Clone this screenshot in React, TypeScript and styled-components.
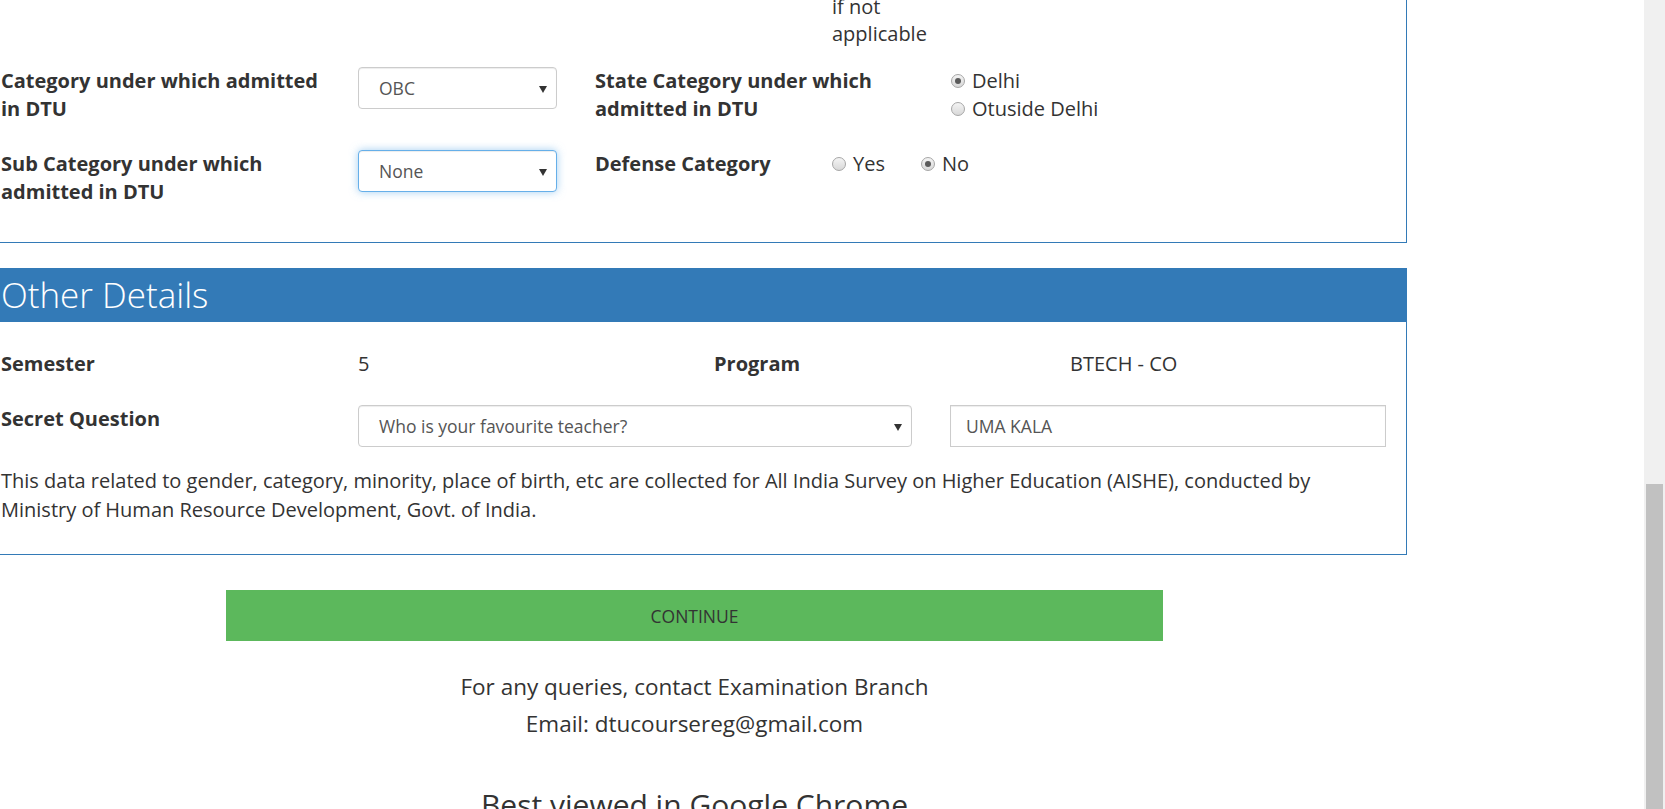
import React from "react";
import styled, { createGlobalStyle } from "styled-components";

const Global = createGlobalStyle`
  html, body { margin: 0; padding: 0; overflow: hidden; background: #fff; }
  body { font-family: "Open Sans", "Liberation Sans", sans-serif; color: #333; font-size: 20px; line-height: 28px; }
  * { box-sizing: border-box; }
`;

const Shell = styled.div`
  display: flex;
  width: 1665px;
  height: 809px;
  overflow: hidden;
`;

const Main = styled.div`
  flex: 1;
  height: 809px;
  overflow: hidden;
  display: flex;
  flex-direction: column;
`;

const ScrollTrack = styled.div`
  width: 21px;
  height: 809px;
  background: #f0f0f0;
  display: flex;
  flex-direction: column;
  justify-content: flex-end;
  padding: 0 2px 0 2px;
`;

const ScrollThumb = styled.div`
  height: 325px;
  background: #c1c1c1;
`;

const Panel = styled.section<{ $top?: number }>`
  width: 1408px;
  margin-left: -1px;
  margin-top: ${(p) => p.$top ?? 0}px;
  border: 1px solid #337ab7;
  flex-shrink: 0;
`;

const PanelBody = styled.div<{ $pt: number; $pb: number }>`
  padding: ${(p) => p.$pt}px 0 ${(p) => p.$pb}px 1px;
  display: flex;
  flex-direction: column;
`;

const Heading = styled.div`
  background: #337ab7;
  color: #fff;
  height: 54px;
  margin: -1px -1px 0 -1px;
  padding-left: 2px;
  font-weight: 300;
  font-size: 35px;
  line-height: 54px;
`;

const FormRow = styled.div<{ $cols: string; $mt?: number }>`
  display: grid;
  grid-template-columns: ${(p) => p.$cols};
  align-items: start;
  margin-top: ${(p) => p.$mt ?? 0}px;
`;

const Label = styled.div`
  font-weight: 700;
  line-height: 28px;
`;

const Value = styled.div`
  line-height: 28px;
`;

const Note = styled.div`
  line-height: 27px;
  color: #333;
`;

const SelectBox = styled.div<{ $focus?: boolean }>`
  position: relative;
  height: 42px;
  border: 1px solid ${(p) => (p.$focus ? "#66afe9" : "#ccc")};
  border-radius: 4px;
  background: #fff;
  color: #555;
  font-size: 17.5px;
  padding-left: 20px;
  line-height: 40px;
  box-shadow: ${(p) =>
    p.$focus
      ? "inset 0 1px 1px rgba(0,0,0,.075), 0 0 8px rgba(102,175,233,.6)"
      : "inset 0 1px 1px rgba(0,0,0,.075)"};
`;

const Arrow = styled.span`
  position: absolute;
  right: 9px;
  top: 18px;
  width: 0;
  height: 0;
  border-left: 4px solid transparent;
  border-right: 4px solid transparent;
  border-top: 7px solid #333;
`;

const TextInput = styled.div`
  height: 42px;
  border: 1px solid #ccc;
  background: #fff;
  color: #555;
  font-size: 17.5px;
  padding-left: 15px;
  line-height: 40px;
  box-shadow: inset 0 1px 1px rgba(0,0,0,.075);
`;

const RadioStack = styled.div`
  display: flex;
  flex-direction: column;
`;

const RadioInline = styled.div`
  display: flex;
  gap: 36px;
`;

const RadioItem = styled.label`
  display: flex;
  align-items: center;
  gap: 7px;
  line-height: 28px;
`;

const Dot = styled.span<{ $on?: boolean }>`
  width: 14px;
  height: 14px;
  border-radius: 50%;
  border: 1px solid #a6a6a6;
  background: linear-gradient(#f4f4f4, #d8d8d8);
  display: flex;
  align-items: center;
  justify-content: center;
  &::after {
    content: "";
    width: 6px;
    height: 6px;
    border-radius: 50%;
    background: ${(p) => (p.$on ? "#5a5a5a" : "transparent")};
  }
`;

const Para = styled.p`
  margin: 20px 0 0 0;
  font-size: 20px;
  line-height: 28.5px;
  padding-right: 40px;
`;

const Footer = styled.div`
  width: 1389px;
  display: flex;
  flex-direction: column;
  align-items: center;
  flex-shrink: 0;
`;

const ContinueButton = styled.button`
  width: 937px;
  height: 51px;
  margin-top: 35px;
  background: #5cb85c;
  border: none;
  color: #333;
  font-family: "Open Sans", "Liberation Sans", sans-serif;
  font-size: 17.5px;
  text-transform: uppercase;
  cursor: pointer;
`;

const Contact = styled.div`
  margin-top: 27px;
  font-size: 22.5px;
  line-height: 37px;
  text-align: center;
`;

const BestViewed = styled.div`
  margin-top: 43px;
  font-size: 30px;
  line-height: 40px;
`;

const Radio = ({ on, children }: { on?: boolean; children: React.ReactNode }) => (
  <RadioItem>
    <Dot $on={on} />
    {children}
  </RadioItem>
);

export default function App() {
  return (
    <>
      <Global />
      <Shell>
        <Main>
          <Panel $top={-8}>
            <PanelBody $pt={0} $pb={36}>
              <FormRow $cols="831px 1fr">
                <div />
                <Note>
                  if not
                  <br />
                  applicable
                </Note>
              </FormRow>
              <FormRow $cols="357px 199px 38px 356px 1fr" $mt={20}>
                <Label>
                  Category under which admitted
                  <br />
                  in DTU
                </Label>
                <SelectBox>
                  OBC
                  <Arrow />
                </SelectBox>
                <div />
                <Label>
                  State Category under which
                  <br />
                  admitted in DTU
                </Label>
                <RadioStack>
                  <Radio on>Delhi</Radio>
                  <Radio>Otuside Delhi</Radio>
                </RadioStack>
              </FormRow>
              <FormRow $cols="357px 199px 38px 237px 1fr" $mt={27}>
                <Label>
                  Sub Category under which
                  <br />
                  admitted in DTU
                </Label>
                <SelectBox $focus>
                  None
                  <Arrow />
                </SelectBox>
                <div />
                <Label>Defense Category</Label>
                <RadioInline>
                  <Radio>Yes</Radio>
                  <Radio on>No</Radio>
                </RadioInline>
              </FormRow>
            </PanelBody>
          </Panel>

          <Panel $top={25}>
            <Heading>Other Details</Heading>
            <PanelBody $pt={28} $pb={30}>
              <FormRow $cols="357px 356px 356px 1fr">
                <Label>Semester</Label>
                <Value>5</Value>
                <Label>Program</Label>
                <Value>BTECH - CO</Value>
              </FormRow>
              <FormRow $cols="357px 554px 38px 436px" $mt={27}>
                <Label>Secret Question</Label>
                <SelectBox>
                  Who is your favourite teacher?
                  <Arrow />
                </SelectBox>
                <div />
                <TextInput>UMA KALA</TextInput>
              </FormRow>
              <Para>
                This data related to gender, category, minority, place of birth, etc are collected for All India
                Survey on Higher Education (AISHE), conducted by Ministry of Human Resource Development, Govt. of India.
              </Para>
            </PanelBody>
          </Panel>

          <Footer>
            <ContinueButton>Continue</ContinueButton>
            <Contact>
              For any queries, contact Examination Branch
              <br />
              Email: dtucoursereg@gmail.com
            </Contact>
            <BestViewed>Best viewed in Google Chrome</BestViewed>
          </Footer>
        </Main>
        <ScrollTrack>
          <ScrollThumb />
        </ScrollTrack>
      </Shell>
    </>
  );
}
